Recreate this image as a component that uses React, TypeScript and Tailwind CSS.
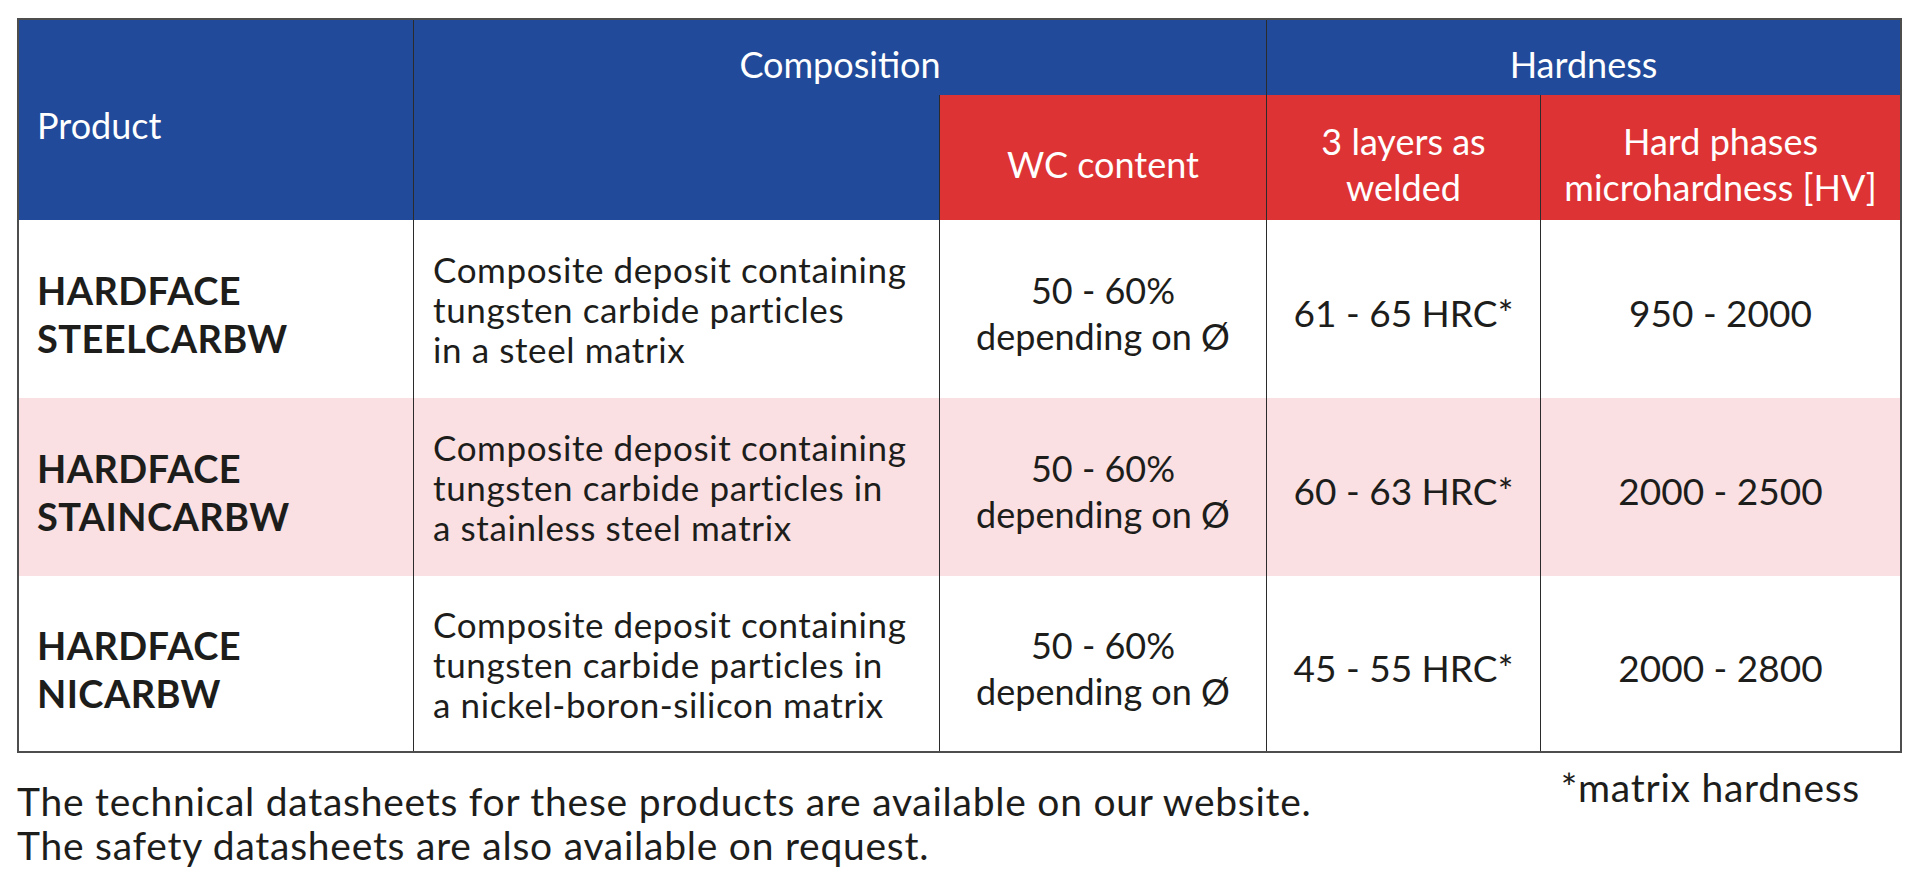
const rows = [
  {
    name: ["HARDFACE", "STEELCARBW"],
    desc: ["Composite deposit containing", "tungsten carbide particles", "in a steel matrix"],
    wc: ["50 - 60%", "depending on Ø"],
    hrc: "61 - 65 HRC*",
    hv: "950 - 2000",
    tint: false,
  },
  {
    name: ["HARDFACE", "STAINCARBW"],
    desc: ["Composite deposit containing", "tungsten carbide particles in", "a stainless steel matrix"],
    wc: ["50 - 60%", "depending on Ø"],
    hrc: "60 - 63 HRC*",
    hv: "2000 - 2500",
    tint: true,
  },
  {
    name: ["HARDFACE", "NICARBW"],
    desc: ["Composite deposit containing", "tungsten carbide particles in", "a nickel-boron-silicon matrix"],
    wc: ["50 - 60%", "depending on Ø"],
    hrc: "45 - 55 HRC*",
    hv: "2000 - 2800",
    tint: false,
  },
];

export default function App() {
  return (
    <div className="w-[1920px] h-[891px] bg-white font-[family-name:Lato,sans-serif] text-[#1d1d1b] pl-[17px] pt-[18px]">
      {/* Table */}
      <div className="w-[1885px] border-2 border-[#4d4d4d] grid grid-cols-[394px_526px_327px_274px_360px] grid-rows-[75px_125px_178px_178px_175px]">
        {/* Header */}
        <div className="row-span-2 bg-[#214b9a] text-white text-[36px] flex items-center pl-[18px] pt-[10px]">
          Product
        </div>
        <div className="col-span-2 bg-[#214b9a] text-white text-[36px] flex items-center justify-center pt-[12px] border-l border-[#2b2b2b]">
          Composition
        </div>
        <div className="col-span-2 bg-[#214b9a] text-white text-[36px] flex items-center justify-center pt-[12px] border-l border-[#2b2b2b]">
          Hardness
        </div>
        <div className="bg-[#214b9a] border-l border-[#2b2b2b]" />
        <div className="bg-[#dd3334] text-white text-[36px] flex items-center justify-center pt-[12px] border-l border-[#2b2b2b]">
          WC content
        </div>
        <div className="bg-[#dd3334] text-white text-[36px] leading-[46px] flex flex-col items-center justify-center pt-[12px] border-l border-[#2b2b2b]">
          <span>3 layers as</span>
          <span>welded</span>
        </div>
        <div className="bg-[#dd3334] text-white text-[36px] leading-[46px] flex flex-col items-center justify-center pt-[12px] border-l border-[#2b2b2b]">
          <span>Hard phases</span>
          <span>microhardness [HV]</span>
        </div>

        {/* Body */}
        {rows.map((r) => {
          const bg = r.tint ? "bg-[#fae0e2]" : "bg-white";
          return (
            <div key={r.name[1]} className="contents">
              <div className={`${bg} flex flex-col justify-center pl-[18px] pt-[10px] text-[38px] tracking-[0.4px] leading-[48px] font-bold`}>
                {r.name.map((n) => (
                  <span key={n}>{n}</span>
                ))}
              </div>
              <div className={`${bg} flex flex-col justify-center pl-[19px] text-[35px] tracking-[0.6px] leading-[40px] border-l border-[#2b2b2b]`}>
                {r.desc.map((d) => (
                  <span key={d}>{d}</span>
                ))}
              </div>
              <div className={`${bg} flex flex-col items-center justify-center pt-[8px] text-[36px] leading-[46px] border-l border-[#2b2b2b]`}>
                {r.wc.map((w) => (
                  <span key={w}>{w}</span>
                ))}
              </div>
              <div className={`${bg} flex items-center justify-center pt-[8px] text-[37px] border-l border-[#2b2b2b]`}>
                {r.hrc}
              </div>
              <div className={`${bg} flex items-center justify-center pt-[8px] text-[37px] border-l border-[#2b2b2b]`}>
                {r.hv}
              </div>
            </div>
          );
        })}
      </div>

      {/* Footer notes */}
      <div className="w-[1885px] flex justify-between items-start text-[39px] tracking-[0.75px] leading-[44px]">
        <div className="pt-[26px] flex flex-col">
          <span>The technical datasheets for these products are available on our website.</span>
          <span>The safety datasheets are also available on request.</span>
        </div>
        <div className="pt-[12px] pr-[42px]">*matrix hardness</div>
      </div>
    </div>
  );
}
